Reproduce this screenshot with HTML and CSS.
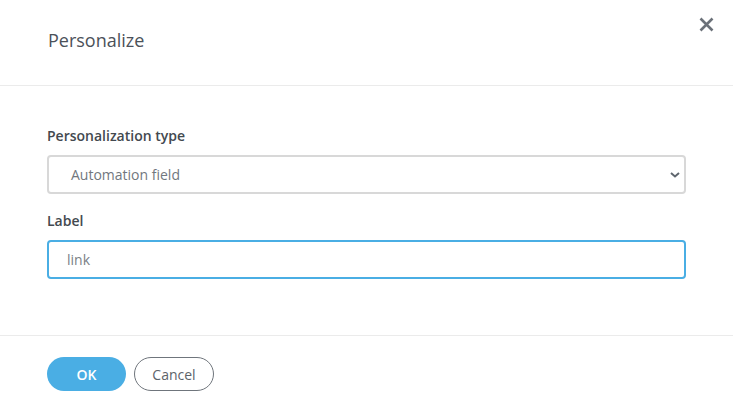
FILE: index.html
```html
<!DOCTYPE html>
<html>
<head>
<meta charset="utf-8">
<link rel="stylesheet" href="styles.css">
</head>
<body>
<div class="modal">
  <header class="modal-header">
    <h2 class="modal-title">Personalize</h2>
    <button class="close-btn" aria-label="Close">
      <svg width="15" height="15" viewBox="0 0 15 15"><path d="M1.5 1.5 L13.5 13.5 M13.5 1.5 L1.5 13.5" stroke="#6b7179" stroke-width="2.6" stroke-linecap="butt" fill="none"/></svg>
    </button>
  </header>
  <section class="modal-body">
    <div class="field">
      <label class="field-label">Personalization type</label>
      <div class="select">
        <span class="select-value">Automation field</span>
        <svg class="chevron" width="10" height="6" viewBox="0 0 10 6"><path d="M1 1 L5 4.5 L9 1" stroke="#5f666e" stroke-width="2" fill="none"/></svg>
      </div>
    </div>
    <div class="field">
      <label class="field-label">Label</label>
      <div class="input">link</div>
    </div>
  </section>
  <footer class="modal-footer">
    <button class="btn btn-primary">OK</button>
    <button class="btn btn-secondary">Cancel</button>
  </footer>
</div>
</body>
</html>
```

FILE: styles.css
```css
html, body {
  margin: 0;
  padding: 0;
  background: #fff;
}
body {
  font-family: "Open Sans", "Liberation Sans", sans-serif;
  width: 733px;
  height: 406px;
  overflow: hidden;
}
.modal {
  display: flex;
  flex-direction: column;
  height: 406px;
}
.modal-header {
  height: 85px;
  border-bottom: 1px solid #ebebeb;
  display: flex;
  align-items: center;
  justify-content: space-between;
  padding: 0 0 0 48px;
  position: relative;
}
.modal-title {
  margin: 0;
  font-size: 18px;
  font-weight: 400;
  color: #4b5159;
  line-height: 24px;
  margin-top: -5px;
}
.close-btn {
  position: absolute;
  top: 17px;
  right: 19px;
  border: 0;
  background: none;
  padding: 0;
  width: 15px;
  height: 15px;
  display: block;
}
.close-btn svg { display: block; }
.modal-body {
  height: 250px;
  padding: 41px 47px 0 47px;
  box-sizing: border-box;
  border-bottom: 1px solid #ebebeb;
  display: flex;
  flex-direction: column;
  gap: 18px;
}
.field {
  display: flex;
  flex-direction: column;
}
.field-label {
  font-size: 14px;
  font-weight: 600;
  color: #43494f;
  line-height: 18px;
  margin-bottom: 10px;
}
.select, .input {
  height: 39px;
  box-sizing: border-box;
  border-radius: 4px;
  display: flex;
  align-items: center;
  font-size: 14px;
  width: 639px;
}
.select {
  border: 2px solid #d8d8d8;
  padding: 0 4px 0 22px;
  justify-content: space-between;
  color: #71777e;
}
.chevron { display: block; margin-top: 1px; }
.input {
  border: 2px solid #4aaee4;
  padding: 0 18px;
  color: #7a7f86;
}
.modal-footer {
  padding: 21px 47px 0;
  display: flex;
  gap: 8px;
}
.btn {
  height: 34px;
  border-radius: 17px;
  font-family: "Open Sans", "Liberation Sans", sans-serif;
  font-size: 14px;
  padding: 0;
  box-sizing: border-box;
}
.btn-primary {
  width: 79px;
  background: #4aaee4;
  border: 0;
  color: #fff;
  font-weight: 600;
}
.btn-secondary {
  width: 80px;
  background: #fff;
  border: 1px solid #6f757c;
  color: #5d636a;
}
```
